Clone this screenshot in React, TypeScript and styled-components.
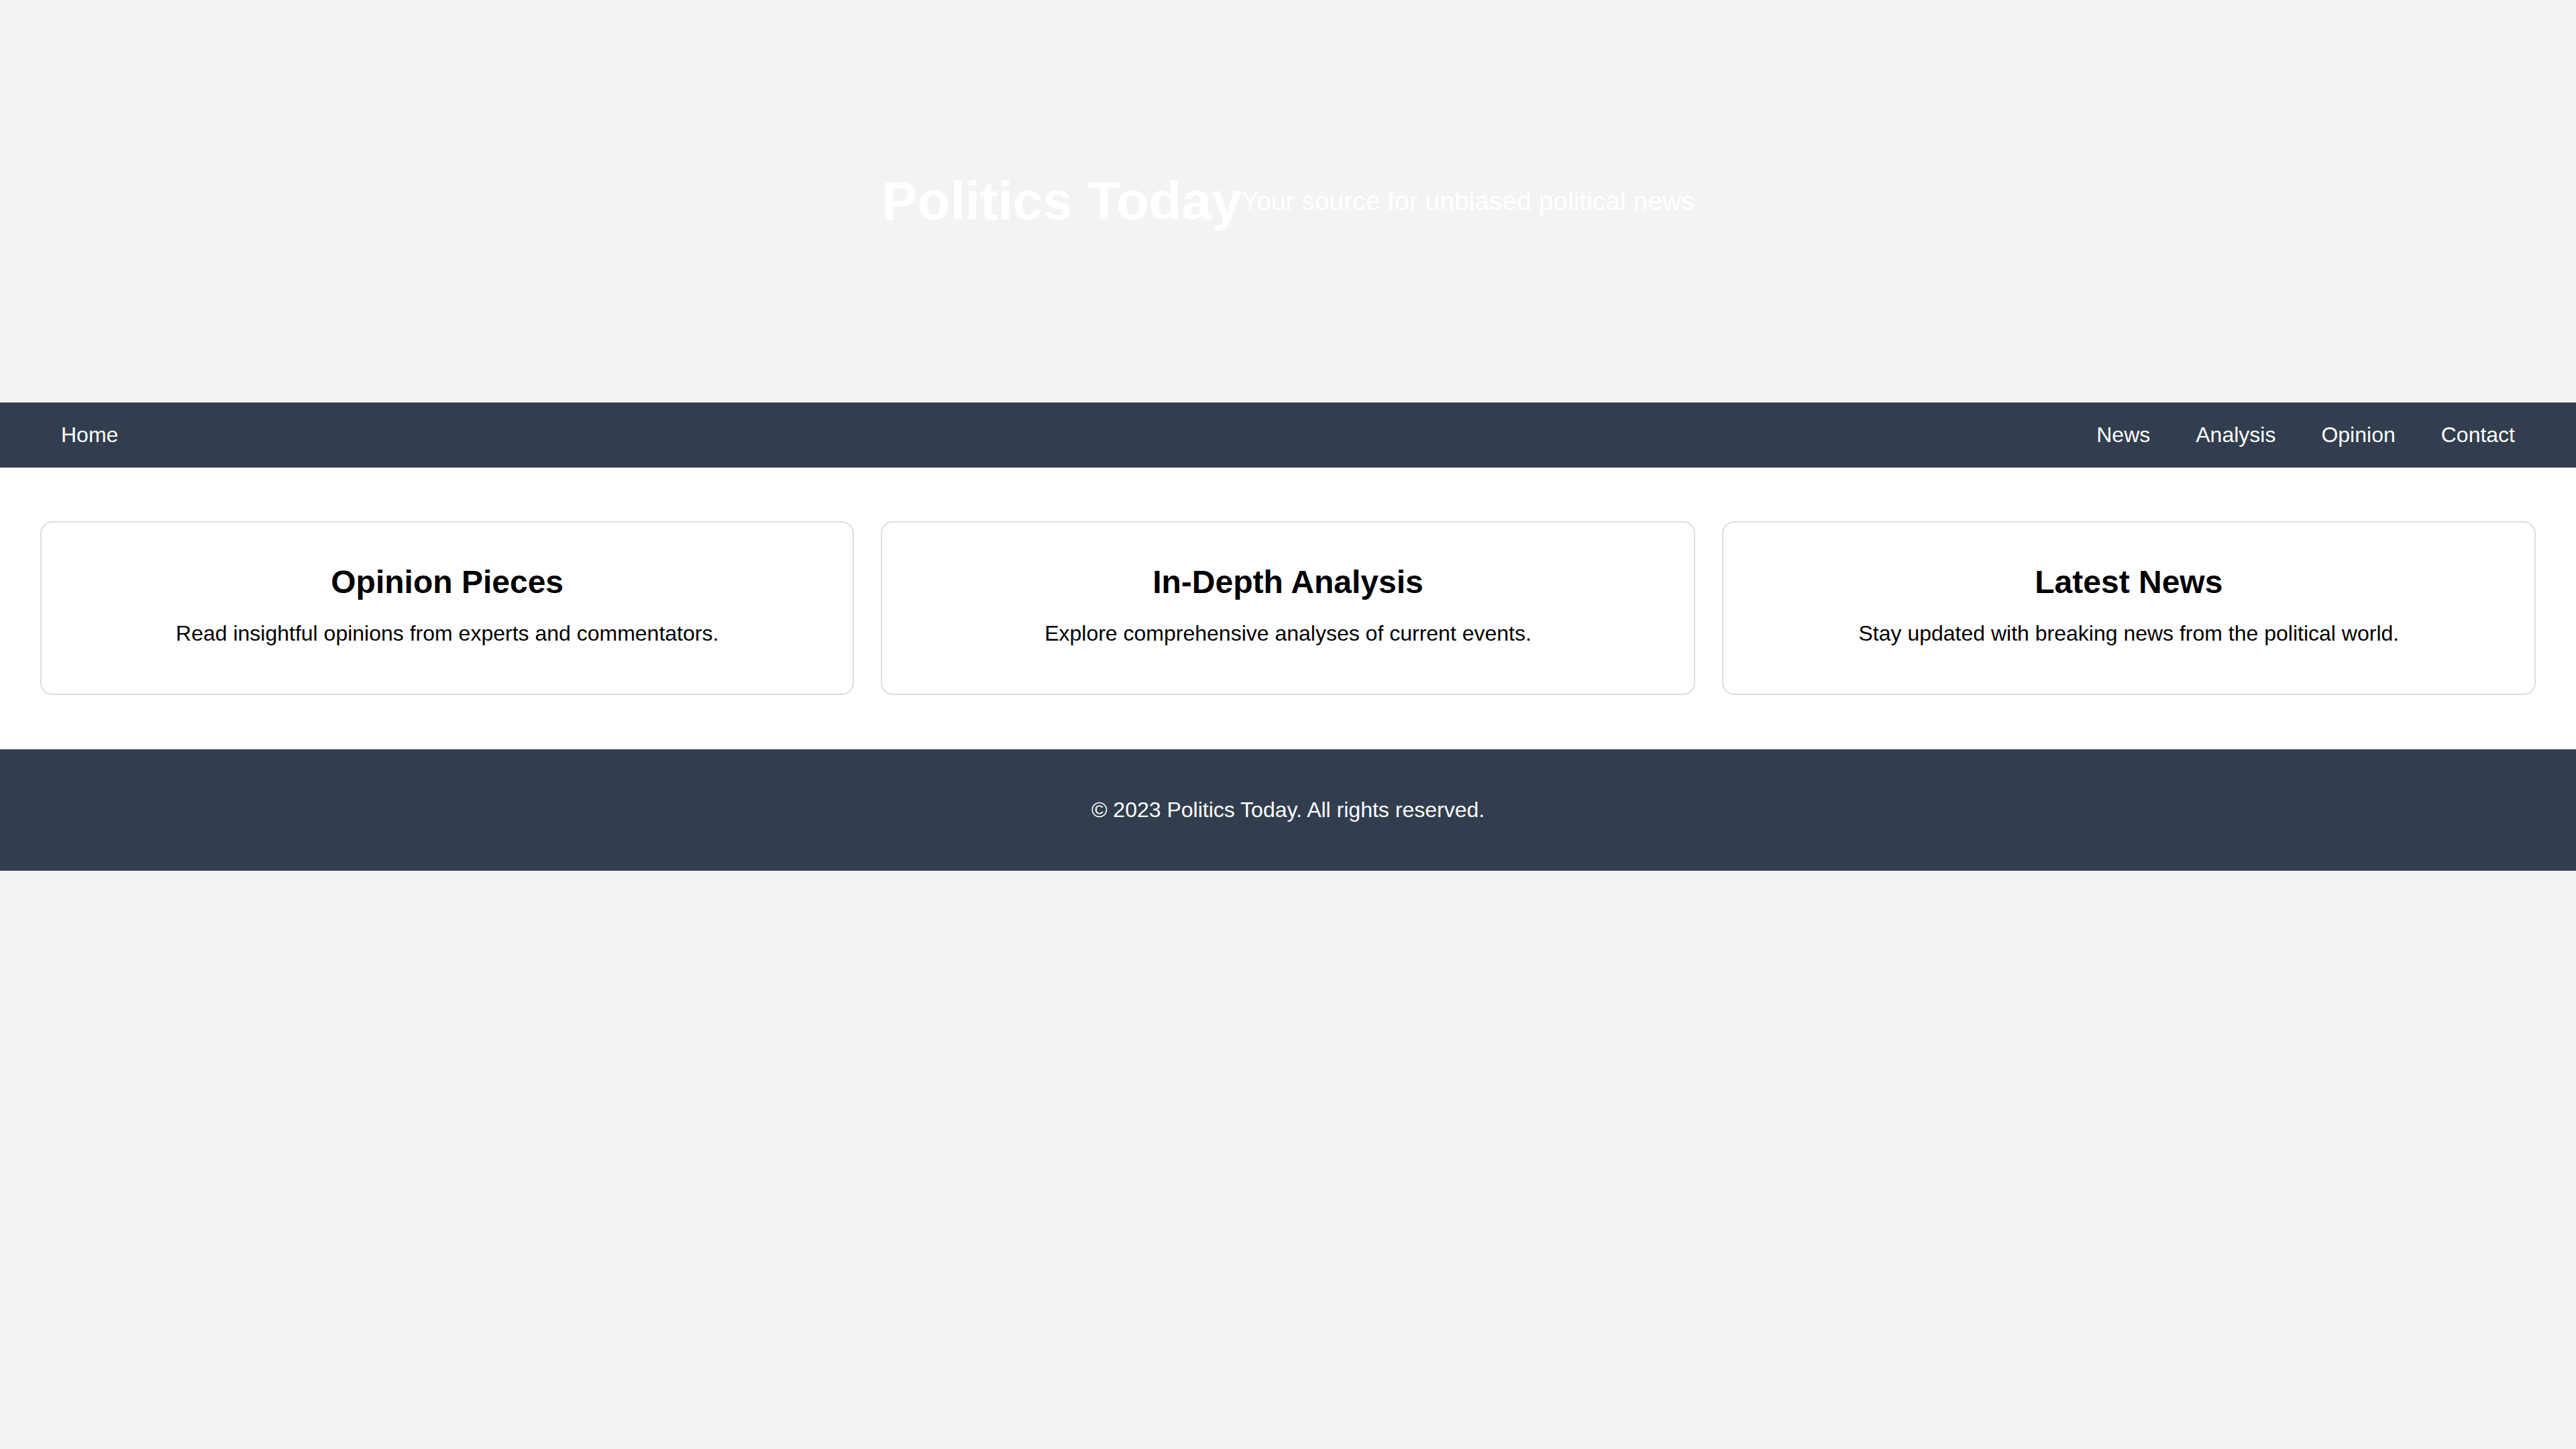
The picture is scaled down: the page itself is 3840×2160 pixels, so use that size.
import React from 'react'
import styled, { createGlobalStyle } from 'styled-components'

const GlobalStyles = createGlobalStyle`
	html, body {
		margin: 0;
		padding: 0;
		background: #f3f3f3;
		font-family: 'Liberation Sans', Arial, Helvetica, sans-serif;
	}
	* {
		box-sizing: border-box;
	}
`

const Header = styled.header`
	height: 600px;
	display: flex;
	align-items: center;
	justify-content: center;
	background: #f3f3f3;
	color: #ffffff;
`

const Title = styled.h1`
	margin: 0;
	font-size: 80px;
	font-weight: 700;
`

const Tagline = styled.p`
	margin: 0;
	font-size: 39px;
`

const Nav = styled.nav`
	height: 97px;
	display: flex;
	align-items: center;
	justify-content: space-between;
	padding: 0 57px;
	background: #323e4f;
`

const NavGroup = styled.div`
	display: flex;
	align-items: center;
`

const NavLink = styled.a`
	color: #ffffff;
	font-size: 32px;
	text-decoration: none;
	padding: 0 34px;
	cursor: pointer;
`

const Main = styled.main`
	background: #ffffff;
	padding: 80px 60px 81px;
	display: grid;
	grid-template-columns: repeat(3, 1fr);
	gap: 40px;
`

const Card = styled.section`
	border: 2px solid #dedede;
	border-radius: 18px;
	padding: 61px 40px 71px;
	text-align: center;
	color: #000000;
`

const CardTitle = styled.h2`
	margin: 0 0 31px;
	font-size: 48px;
	font-weight: 700;
`

const CardText = styled.p`
	margin: 0;
	font-size: 32px;
`

const Footer = styled.footer`
	height: 181px;
	display: flex;
	align-items: center;
	justify-content: center;
	background: #323e4f;
	color: #ffffff;
	font-size: 32px;
`

const cards = [
	{
		title: 'Opinion Pieces',
		text: 'Read insightful opinions from experts and commentators.',
	},
	{
		title: 'In-Depth Analysis',
		text: 'Explore comprehensive analyses of current events.',
	},
	{
		title: 'Latest News',
		text: 'Stay updated with breaking news from the political world.',
	},
]

const App: React.FC = () => {
	return (
		<>
			<GlobalStyles />
			<Header>
				<Title>Politics Today</Title>
				<Tagline>Your source for unbiased political news</Tagline>
			</Header>
			<Nav>
				<NavGroup>
					<NavLink>Home</NavLink>
				</NavGroup>
				<NavGroup>
					<NavLink>News</NavLink>
					<NavLink>Analysis</NavLink>
					<NavLink>Opinion</NavLink>
					<NavLink>Contact</NavLink>
				</NavGroup>
			</Nav>
			<Main>
				{cards.map((card) => (
					<Card key={card.title}>
						<CardTitle>{card.title}</CardTitle>
						<CardText>{card.text}</CardText>
					</Card>
				))}
			</Main>
			<Footer>© 2023 Politics Today. All rights reserved.</Footer>
		</>
	)
}

export default App
